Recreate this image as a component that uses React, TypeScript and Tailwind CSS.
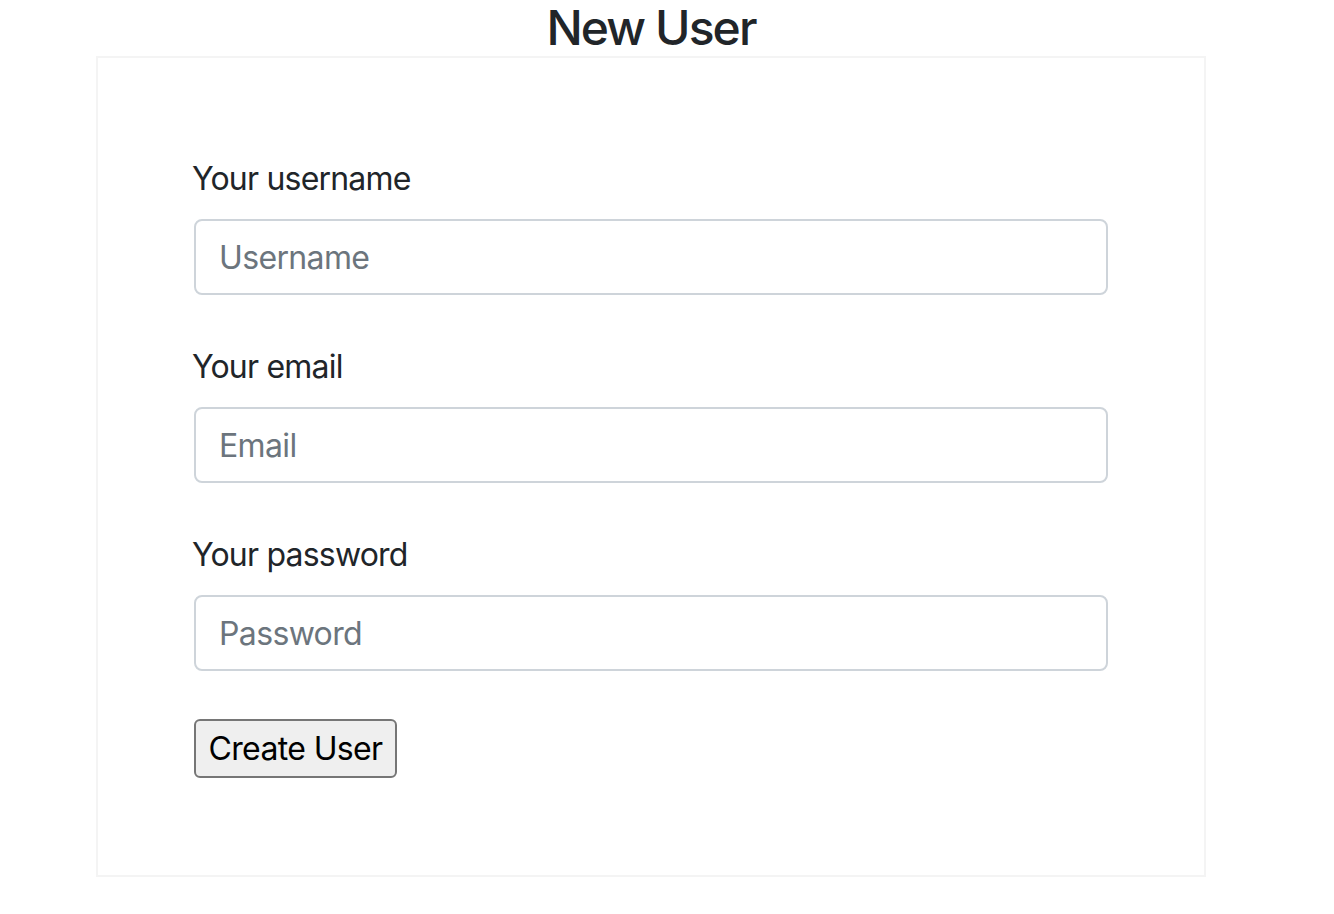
import { useState } from "react";

const font = { fontFamily: "Inter, 'Liberation Sans', sans-serif" };

function Field({
  label,
  placeholder,
  type = "text",
}: {
  label: string;
  placeholder: string;
  type?: string;
}) {
  const [value, setValue] = useState("");
  return (
    <div className="mb-[48px] flex flex-col">
      <label className="-ml-[2px] mb-[16px] text-[32px] leading-[48px] tracking-[-0.025em] text-[#212529]">
        {label}
      </label>
      <input
        type={type}
        value={value}
        onChange={(e) => setValue(e.target.value)}
        placeholder={placeholder}
        className="h-[76px] w-full rounded-[8px] border-2 border-[#ced4da] bg-white px-[23px] text-[32px] tracking-[-0.02em] text-[#495057] outline-none placeholder:text-[#6c757d]"
      />
    </div>
  );
}

export default function App() {
  return (
    <div className="min-h-screen bg-white" style={font}>
      <div className="w-[1302px]">
        <h4 className="text-center text-[48px] font-medium leading-[56px] tracking-[-0.04em] text-[#212529]">
          New User
        </h4>
        <div className="mx-auto w-[1110px] border-2 border-[#f4f4f4] px-[96px] pt-[97px] pb-[97px]">
          <form onSubmit={(e) => e.preventDefault()}>
            <Field label="Your username" placeholder="Username" />
            <Field label="Your email" placeholder="Email" type="email" />
            <Field label="Your password" placeholder="Password" type="password" />
            <button
              type="submit"
              className="flex h-[59px] w-[203px] items-center justify-center rounded-[6px] border-2 border-[#767676] bg-[#efefef] text-[32px] tracking-[-0.02em] text-black"
            >
              Create User
            </button>
          </form>
        </div>
      </div>
    </div>
  );
}
